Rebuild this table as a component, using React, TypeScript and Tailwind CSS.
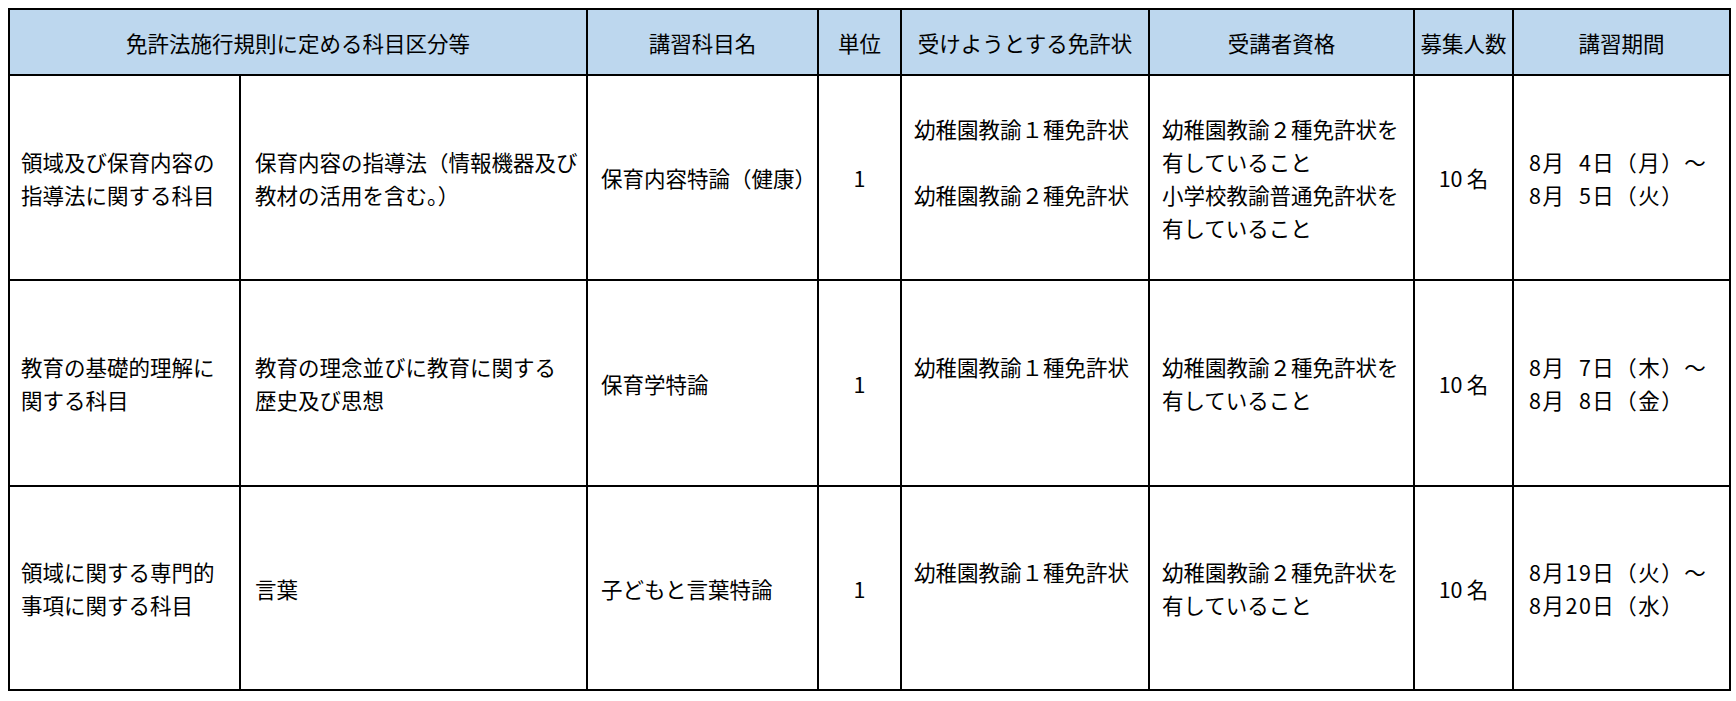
const FS = '\u2007';

const headers = [
  { label: '免許法施行規則に定める科目区分等', span: 2 },
  { label: '講習科目名' },
  { label: '単位' },
  { label: '受けようとする免許状' },
  { label: '受講者資格' },
  { label: '募集人数' },
  { label: '講習期間' },
];

interface Row {
  height: string;
  area: string[];
  subject: string[];
  course: string;
  licenses: string[];
  qualification: string[];
  dates: string[];
}

const rows: Row[] = [
  {
    height: 'h-[205px]',
    area: ['領域及び保育内容の', '指導法に関する科目'],
    subject: ['保育内容の指導法（情報機器及び', '教材の活用を含む。）'],
    course: '保育内容特論（健康）',
    licenses: ['幼稚園教諭１種免許状', '', '幼稚園教諭２種免許状', ''],
    qualification: ['幼稚園教諭２種免許状を', '有していること', '小学校教諭普通免許状を', '有していること'],
    dates: [`8月${FS}4日（月）～`, `8月${FS}5日（火）`],
  },
  {
    height: 'h-[206px]',
    area: ['教育の基礎的理解に', '関する科目'],
    subject: ['教育の理念並びに教育に関する', '歴史及び思想'],
    course: '保育学特論',
    licenses: ['幼稚園教諭１種免許状', ''],
    qualification: ['幼稚園教諭２種免許状を', '有していること'],
    dates: [`8月${FS}7日（木）～`, `8月${FS}8日（金）`],
  },
  {
    height: 'h-[204px]',
    area: ['領域に関する専門的', '事項に関する科目'],
    subject: ['言葉'],
    course: '子どもと言葉特論',
    licenses: ['幼稚園教諭１種免許状', ''],
    qualification: ['幼稚園教諭２種免許状を', '有していること'],
    dates: ['8月19日（火）～', '8月20日（水）'],
  },
];

function Lines({ lines }: { lines: string[] }) {
  return (
    <>
      {lines.map((l, i) => (
        <div key={i} className="h-[33px] whitespace-nowrap">
          {l || '\u00a0'}
        </div>
      ))}
    </>
  );
}

const cell = 'border-2 border-black align-middle';

export default function App() {
  return (
    <div className="min-h-screen bg-white p-2 font-['Noto_Sans_CJK_JP','Noto_Sans',sans-serif] text-[21.5px] leading-[33px] text-black">
      <table className="table-fixed border-collapse w-[1721px]">
        <colgroup>
          <col className="w-[231px]" />
          <col className="w-[347px]" />
          <col className="w-[231px]" />
          <col className="w-[83px]" />
          <col className="w-[248px]" />
          <col className="w-[265px]" />
          <col className="w-[99px]" />
          <col className="w-[217px]" />
        </colgroup>
        <thead>
          <tr className="h-[66px] bg-[#bdd7ee]">
            {headers.map((h) => (
              <th
                key={h.label}
                colSpan={h.span ?? 1}
                className={`${cell} p-0 text-center font-normal whitespace-nowrap`}
              >
                {h.label}
              </th>
            ))}
          </tr>
        </thead>
        <tbody>
          {rows.map((r) => (
            <tr key={r.course} className={r.height}>
              <td className={`${cell} pl-[11px] pr-1`}>
                <Lines lines={r.area} />
              </td>
              <td className={`${cell} pl-[14px] pr-1`}>
                <Lines lines={r.subject} />
              </td>
              <td className={`${cell} pl-[13px] pr-1 whitespace-nowrap`}>{r.course}</td>
              <td className={`${cell} text-center`}>1</td>
              <td className={`${cell} pl-[12px] pr-1`}>
                <Lines lines={r.licenses} />
              </td>
              <td className={`${cell} pl-[12px] pr-1`}>
                <Lines lines={r.qualification} />
              </td>
              <td className={`${cell} text-center whitespace-nowrap`}>10{'\u2009'}名</td>
              <td className={`${cell} pl-[15px] pr-1 tracking-[1.5px]`}>
                <Lines lines={r.dates} />
              </td>
            </tr>
          ))}
        </tbody>
      </table>
    </div>
  );
}
